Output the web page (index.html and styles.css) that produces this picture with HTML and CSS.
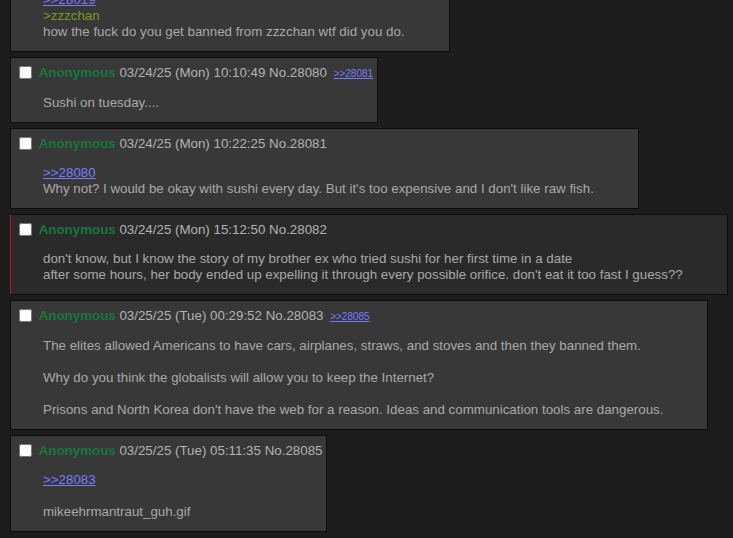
FILE: index.html
```html
<!DOCTYPE html>
<html lang="en">
<head>
  <meta charset="UTF-8">
  <meta name="viewport" content="width=device-width, initial-scale=1.0">
  <title>/b/ - Thread</title>
  <link rel="stylesheet" href="styles.css">
</head>
<body>
  <div class="thread">
    <div class="post" id="p28079">
      <div class="post-info">
        <input type="checkbox" class="post-select">
        <span class="name">Anonymous</span>
        <span class="date">03/24/25 (Mon) 09:58:12</span>
        <span class="no">No.28079</span>
      </div>
      <div class="post-body">
        <a href="#p28019" class="quote-link">&gt;&gt;28019</a><br>
        <span class="greentext">&gt;zzzchan</span><br>
        how the fuck do you get banned from zzzchan wtf did you do.
      </div>
    </div>

    <div class="post" id="p28080">
      <div class="post-info">
        <input type="checkbox" class="post-select">
        <span class="name">Anonymous</span>
        <span class="date">03/24/25 (Mon) 10:10:49</span>
        <span class="no">No.28080</span>
        <a href="#p28081" class="backlink">&gt;&gt;28081</a>
      </div>
      <div class="post-body">
        Sushi on tuesday....
      </div>
    </div>

    <div class="post" id="p28081">
      <div class="post-info">
        <input type="checkbox" class="post-select">
        <span class="name">Anonymous</span>
        <span class="date">03/24/25 (Mon) 10:22:25</span>
        <span class="no">No.28081</span>
      </div>
      <div class="post-body">
        <a href="#p28080" class="quote-link">&gt;&gt;28080</a><br>
        Why not? I would be okay with sushi every day. But it's too expensive and I don't like raw fish.
      </div>
    </div>

    <div class="post post-highlight" id="p28082">
      <div class="post-info">
        <input type="checkbox" class="post-select">
        <span class="name">Anonymous</span>
        <span class="date">03/24/25 (Mon) 15:12:50</span>
        <span class="no">No.28082</span>
      </div>
      <div class="post-body">
        don't know, but I know the story of my brother ex who tried sushi for her first time in a date<br>
        after some hours, her body ended up expelling it through every possible orifice. don't eat it too fast I guess??
      </div>
    </div>

    <div class="post" id="p28083">
      <div class="post-info">
        <input type="checkbox" class="post-select">
        <span class="name">Anonymous</span>
        <span class="date">03/25/25 (Tue) 00:29:52</span>
        <span class="no">No.28083</span>
        <a href="#p28085" class="backlink">&gt;&gt;28085</a>
      </div>
      <div class="post-body">
        The elites allowed Americans to have cars, airplanes, straws, and stoves and then they banned them.<br>
        <br>
        Why do you think the globalists will allow you to keep the Internet?<br>
        <br>
        Prisons and North Korea don't have the web for a reason. Ideas and communication tools are dangerous.
      </div>
    </div>

    <div class="post" id="p28085">
      <div class="post-info">
        <input type="checkbox" class="post-select">
        <span class="name">Anonymous</span>
        <span class="date">03/25/25 (Tue) 05:11:35</span>
        <span class="no">No.28085</span>
      </div>
      <div class="post-body">
        <a href="#p28083" class="quote-link">&gt;&gt;28083</a><br>
        <br>
        mikeehrmantraut_guh.gif
      </div>
    </div>
  </div>
</body>
</html>
```

FILE: styles.css
```css
:root {
  --bg: #1d1d1d;
  --post-bg: #383838;
  --post-highlight: #2a2a2a;
  --border: #0c0c0c;
  --text: #a9a9a9;
  --info: #b3b3b3;
  --name: #17773f;
  --link: #7a7aff;
  --green: #789922;
}

* {
  box-sizing: border-box;
}

body {
  margin: 0;
  padding: 0 0 0 10px;
  background: var(--bg);
  color: var(--text);
  font-family: 'Liberation Sans', Arial, sans-serif;
  font-size: 10pt;
  overflow: hidden;
}

/* page is scrolled down a little */
.thread {
  margin-top: -45px;
}

.post {
  width: max-content;
  background: var(--post-bg);
  border: 1px solid var(--border);
  padding: 5px 4px 11px 4px;
  margin-bottom: 5px;
}

.post-highlight {
  background: var(--post-highlight);
  border-left-color: #c41414;
}

.post-info {
  line-height: 20px;
  color: var(--info);
  white-space: nowrap;
}

.post-select {
  width: 13px;
  height: 13px;
  margin: 0 3px 0 4px;
  vertical-align: -2px;
}

.name {
  color: var(--name);
  font-weight: bold;
}

.backlink {
  color: var(--link);
  font-size: 10px;
  margin-left: 3px;
}

.post-body {
  margin: 11px 40px 0 28px;
  line-height: 16px;
}

.quote-link {
  color: var(--link);
}

.greentext {
  color: var(--green);
}
```
